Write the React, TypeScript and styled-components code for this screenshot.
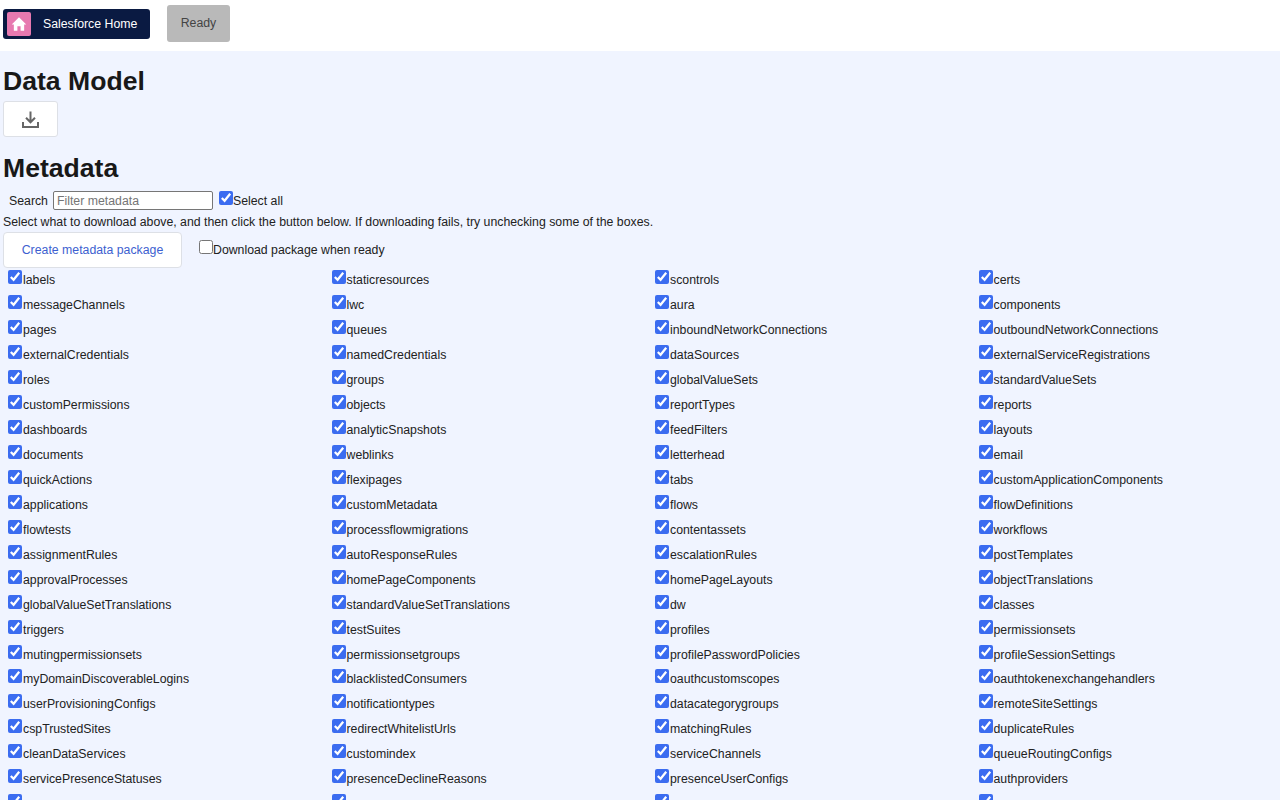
import React from 'react'
import styled, { createGlobalStyle } from 'styled-components'

const GlobalStyle = createGlobalStyle`
  html, body {
    margin: 0;
    padding: 0;
    height: 800px;
    overflow: hidden;
    background-color: #f0f4ff;
    font-family: 'Liberation Sans', Arial, sans-serif;
    font-size: 12.3px;
    color: #222;
  }
  * {
    box-sizing: border-box;
  }
`

const TopBar = styled.header`
  display: flex;
  align-items: center;
  height: 51px;
  padding: 0 3px 3px;
  background-color: #fff;
`
const HomeLink = styled.a`
  display: flex;
  align-items: center;
  width: 147px;
  height: 30px;
  padding-left: 4px;
  border-radius: 3px;
  background-color: #0a1a42;
  color: #fff;
  font-size: 12.3px;
  text-decoration: none;
`
const HomeIcon = styled.span`
  display: flex;
  align-items: center;
  justify-content: center;
  width: 24px;
  height: 24px;
  margin-right: 12px;
  border-radius: 2px;
  background-color: #e779b0;
`
const Status = styled.div`
  display: flex;
  align-items: center;
  justify-content: center;
  width: 63px;
  height: 37px;
  margin: -1px 0 0 17px;
  padding-bottom: 2px;
  border-radius: 3px;
  background-color: #b9b9b9;
  color: #444;
  font-size: 12.3px;
`
const Main = styled.main`
  padding: 0 3px;
`
const Title = styled.h1<{ first?: boolean }>`
  margin: ${(props) => (props.first ? '15px' : '0')} 0 0;
  font-size: 26.6px;
  line-height: 31px;
  font-weight: 700;
  color: #181818;
`
const DownloadButton = styled.button`
  display: flex;
  align-items: center;
  justify-content: center;
  width: 55px;
  height: 36px;
  margin: 4px 0 16px;
  padding: 0;
  border: 1px solid #dde0e6;
  border-radius: 3px;
  background-color: #fff;
`
const SearchRow = styled.div`
  display: flex;
  align-items: center;
  height: 21px;
  margin-top: 6px;
  padding-left: 6px;
`
const SearchLabel = styled.label`
  margin-right: 5px;
`
const SearchInput = styled.input`
  width: 160px;
  height: 19px;
  margin-right: 6px;
  padding: 0 3px;
  border: 1px solid #767676;
  border-radius: 2px;
  background-color: #fff;
  font-family: inherit;
  font-size: 12.3px;
  &::placeholder {
    color: #757575;
  }
`
const Check = styled.input.attrs({ type: 'checkbox' })`
  flex: none;
  width: 14px;
  height: 14px;
  margin: 0;
  position: relative;
  top: -3px;
  accent-color: #3b6cf0;
`
const Hint = styled.div`
  height: 21px;
  line-height: 23px;
`
const PackageRow = styled.div`
  display: flex;
  align-items: center;
  height: 36px;
`
const PackageButton = styled.button`
  width: 179px;
  height: 36px;
  margin-right: 17px;
  padding: 0;
  border: 1px solid #dde0e6;
  border-radius: 4px;
  background-color: #fff;
  color: #3d5fd0;
  font-family: inherit;
  font-size: 12.3px;
`
const Option = styled.label`
  display: flex;
  align-items: center;
  white-space: nowrap;
`
const MetaGrid = styled.div`
  display: grid;
  grid-template-columns: repeat(4, 323.5px);
  grid-auto-rows: 24.98px;
  margin-top: -1px;
  padding-left: 5px;
`
const MetaItem = styled(Option)`
  padding-top: 1px;
  & > input {
    margin-right: 1px;
  }
`

const metadata = [
  'labels', 'staticresources', 'scontrols', 'certs',
  'messageChannels', 'lwc', 'aura', 'components',
  'pages', 'queues', 'inboundNetworkConnections', 'outboundNetworkConnections',
  'externalCredentials', 'namedCredentials', 'dataSources', 'externalServiceRegistrations',
  'roles', 'groups', 'globalValueSets', 'standardValueSets',
  'customPermissions', 'objects', 'reportTypes', 'reports',
  'dashboards', 'analyticSnapshots', 'feedFilters', 'layouts',
  'documents', 'weblinks', 'letterhead', 'email',
  'quickActions', 'flexipages', 'tabs', 'customApplicationComponents',
  'applications', 'customMetadata', 'flows', 'flowDefinitions',
  'flowtests', 'processflowmigrations', 'contentassets', 'workflows',
  'assignmentRules', 'autoResponseRules', 'escalationRules', 'postTemplates',
  'approvalProcesses', 'homePageComponents', 'homePageLayouts', 'objectTranslations',
  'globalValueSetTranslations', 'standardValueSetTranslations', 'dw', 'classes',
  'triggers', 'testSuites', 'profiles', 'permissionsets',
  'mutingpermissionsets', 'permissionsetgroups', 'profilePasswordPolicies', 'profileSessionSettings',
  'myDomainDiscoverableLogins', 'blacklistedConsumers', 'oauthcustomscopes', 'oauthtokenexchangehandlers',
  'userProvisioningConfigs', 'notificationtypes', 'datacategorygroups', 'remoteSiteSettings',
  'cspTrustedSites', 'redirectWhitelistUrls', 'matchingRules', 'duplicateRules',
  'cleanDataServices', 'customindex', 'serviceChannels', 'queueRoutingConfigs',
  'servicePresenceStatuses', 'presenceDeclineReasons', 'presenceUserConfigs', 'authproviders',
  '', '', '', '',
]

const App = () => {
  return (
    <>
      <GlobalStyle />
      <TopBar>
        <HomeLink href="#">
          <HomeIcon>
            <svg width="16" height="16" viewBox="0 0 18 18" fill="#fff">
              <path d="M9 1.5 0.8 9.6h2.4V16.5h4v-5h3.6v5h4V9.6h2.4z" />
            </svg>
          </HomeIcon>
          Salesforce Home
        </HomeLink>
        <Status>Ready</Status>
      </TopBar>
      <Main>
        <Title first>Data Model</Title>
        <DownloadButton aria-label="Download">
          <svg width="19" height="19" viewBox="0 0 19 19" fill="none" stroke="#666" strokeWidth="2">
            <path d="M9.5 1.5v10.5M5 7.8l4.5 4.5 4.5-4.5" />
            <path d="M2 12v5h15v-5" />
          </svg>
        </DownloadButton>
        <Title>Metadata</Title>
        <SearchRow>
          <SearchLabel>Search</SearchLabel>
          <SearchInput placeholder="Filter metadata" />
          <Option>
            <Check defaultChecked />
            Select all
          </Option>
        </SearchRow>
        <Hint>Select what to download above, and then click the button below. If downloading fails, try unchecking some of the boxes.</Hint>
        <PackageRow>
          <PackageButton>Create metadata package</PackageButton>
          <Option>
            <Check />
            Download package when ready
          </Option>
        </PackageRow>
        <MetaGrid>
          {metadata.map((name, i) => (
            <MetaItem key={i}>
              <Check defaultChecked />
              {name}
            </MetaItem>
          ))}
        </MetaGrid>
      </Main>
    </>
  )
}

export default App
